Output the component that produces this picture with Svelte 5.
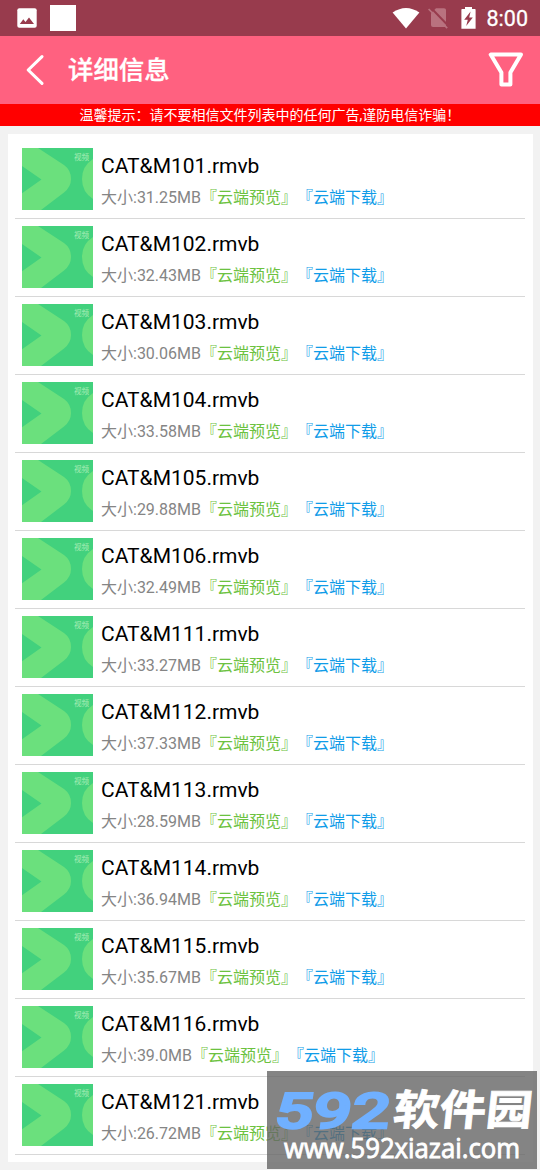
<script>
  const files = [
    { name: 'CAT&M101.rmvb', size: '31.25MB' },
    { name: 'CAT&M102.rmvb', size: '32.43MB' },
    { name: 'CAT&M103.rmvb', size: '30.06MB' },
    { name: 'CAT&M104.rmvb', size: '33.58MB' },
    { name: 'CAT&M105.rmvb', size: '29.88MB' },
    { name: 'CAT&M106.rmvb', size: '32.49MB' },
    { name: 'CAT&M111.rmvb', size: '33.27MB' },
    { name: 'CAT&M112.rmvb', size: '37.33MB' },
    { name: 'CAT&M113.rmvb', size: '28.59MB' },
    { name: 'CAT&M114.rmvb', size: '36.94MB' },
    { name: 'CAT&M115.rmvb', size: '35.67MB' },
    { name: 'CAT&M116.rmvb', size: '39.0MB' },
    { name: 'CAT&M121.rmvb', size: '26.72MB' },
  ];
</script>

<main>
  <div class="status-bar">
    <svg class="picture" width="20" height="20" viewBox="0 0 20 20">
      <rect x="0.3" y="0.3" width="19.4" height="19.4" rx="2" fill="#fff" />
      <path d="M2.8 16 L6.3 11.3 L8.5 14 L12 9.6 L17 16 Z" fill="#983b4d" />
    </svg>
    <div class="square"></div>
    <svg class="wifi" width="28" height="22" viewBox="0 0 28 22">
      <path d="M0.6 5.5 Q14 -3.5 27.4 5.5 L14 21.6 Z" fill="#fff" />
    </svg>
    <svg class="sim" width="20" height="22" viewBox="0 0 20 22">
      <path d="M8 1.2 H16 Q18 1.2 18 3 V20 H5 Q3 20 3 18 V6.2 Z" fill="#b9727f" />
      <path d="M2.4 0.2 L20.5 19" stroke="#983b4d" stroke-width="2" />
      <path d="M0.6 2 L19.2 21.2" stroke="#b9727f" stroke-width="1.7" />
    </svg>
    <svg class="battery" width="15" height="22" viewBox="0 0 15 22">
      <path d="M4 0 H11 V2 H14 Q14.6 2 14.6 3 V21.7 H0.4 V3 Q0.4 2 1 2 H4 Z" fill="#fff" />
      <path d="M9.6 4.6 L3.2 12.8 H6.8 L5.2 19 L11.8 10.4 H8.2 Z" fill="#983b4d" />
    </svg>
    <span class="clock">8:00</span>
  </div>

  <header>
    <svg class="back" width="20" height="32" viewBox="0 0 20 32">
      <path d="M17 2.7 L3.2 16 L17 29.3" fill="none" stroke="#fff" stroke-width="3.1" stroke-linecap="round" stroke-linejoin="round" />
    </svg>
    <h1>详细信息</h1>
    <svg class="filter" width="36" height="36" viewBox="0 0 36 36">
      <path d="M2.7 2.6 H33 L22.4 20.6 V32.5 H13.4 V20.6 Z" fill="none" stroke="#fff" stroke-width="4" stroke-linejoin="round" />
    </svg>
  </header>

  <div class="notice">温馨提示：请不要相信文件列表中的任何广告,谨防电信诈骗！</div>

  <div class="card">
    {#each files as file}
      <div class="row">
        <div class="thumb">
          <svg width="71" height="62" viewBox="0 0 71 62">
            <rect width="71" height="62" fill="#42d17d" />
            <path d="M0 0 H16 L42 17 Q49 22 49 31 Q49 39 42 44.5 L19 62 H0 V45.3 L19.5 31.5 L0 18 Z" fill="#6be07d" />
            <path d="M71 11 Q60 18 60 31 Q60 44 71 51 Z" fill="#6be07d" />
          </svg>
          <span class="kind">视频</span>
        </div>
        <div class="info">
          <div class="name">{file.name}</div>
          <div class="meta">大小:{file.size}<span class="preview">『云端预览』</span><span class="download">『云端下载』</span></div>
        </div>
      </div>
    {/each}
  </div>

  <div class="watermark">
    <svg width="270" height="98" viewBox="0 0 270 98">
      <g transform="translate(6 57) skewX(-8)">
        <text class="digits" x="0" y="0" textLength="115" lengthAdjust="spacingAndGlyphs">592</text>
      </g>
      <g transform="translate(125 54) skewX(-6)">
        <text class="brand" x="0" y="0" textLength="139" lengthAdjust="spacingAndGlyphs">软件园</text>
      </g>
      <text class="site" x="17" y="87" textLength="236" lengthAdjust="spacingAndGlyphs">www.592xiazai.com</text>
    </svg>
  </div>
</main>

<style>
  :global(body) {
    margin: 0;
    background: #f2f2f2;
  }

  main {
    position: relative;
    width: 540px;
    height: 1170px;
    overflow: hidden;
    background: #f2f2f2;
    font-family: Roboto, 'Noto Sans CJK SC', sans-serif;
  }

  svg {
    display: block;
    flex: none;
  }

  .status-bar {
    display: flex;
    align-items: center;
    height: 36px;
    box-sizing: border-box;
    padding: 0 12px 0 17px;
    background: #983b4d;
  }

  .square {
    width: 26px;
    height: 26px;
    margin-left: 13px;
    background: #fff;
  }

  .wifi {
    margin-left: auto;
  }

  .sim {
    margin-left: 8px;
  }

  .battery {
    margin-left: 13px;
  }

  .clock {
    margin-left: 11px;
    color: #fff;
    font-size: 21.5px;
    font-weight: 400;
    line-height: 36px;
    padding-top: 2px;
    -webkit-text-stroke: 0.3px #fff;
  }

  header {
    display: flex;
    align-items: center;
    height: 67.5px;
    box-sizing: border-box;
    padding: 0 16px 0 25px;
    background: #ff6180;
  }

  h1 {
    margin: 0 auto 0 23px;
    color: #fff;
    font-size: 25.4px;
    font-weight: 500;
    line-height: 36px;
    padding-top: 1px;
    -webkit-text-stroke: 0.3px #fff;
  }

  .notice {
    height: 22.5px;
    background: #f00;
    color: #fff;
    font-size: 14px;
    line-height: 22px;
    text-align: center;
    white-space: nowrap;
  }

  .card {
    box-sizing: border-box;
    height: 1028.5px;
    margin: 7.5px 7.5px 0;
    padding: 7.5px 7.5px 0;
    background: #fff;
  }

  .row {
    display: flex;
    height: 78px;
    box-sizing: border-box;
    padding: 7px 7px 0;
    border-bottom: 1.5px solid #d8d8d8;
  }

  .thumb {
    position: relative;
    width: 71px;
    height: 62px;
  }

  .kind {
    position: absolute;
    top: 4px;
    right: 4px;
    color: #a9edb5;
    font-size: 7.5px;
    line-height: 11px;
  }

  .info {
    margin-left: 8px;
    padding-top: 1px;
    white-space: nowrap;
  }

  .name {
    color: #000;
    font-size: 21px;
    line-height: 34px;
  }

  .meta {
    color: #858585;
    font-size: 16px;
    line-height: 30px;
  }

  .preview {
    color: #6cc240;
  }

  .download {
    margin-left: 8px;
    color: #109ce8;
  }

  .watermark {
    position: absolute;
    left: 267px;
    top: 1071px;
    width: 270px;
    height: 98px;
    background: rgba(101, 101, 101, 0.8);
  }

  .digits {
    fill: #70b0ff;
    stroke: #70b0ff;
    stroke-width: 2.4px;
    stroke-linejoin: miter;
    font-family: Roboto, sans-serif;
    font-size: 49px;
    font-weight: 500;
  }

  .brand {
    fill: #fff;
    stroke: #fff;
    stroke-width: 0.8px;
    font-family: 'Noto Sans CJK SC', sans-serif;
    font-size: 42px;
    font-weight: 700;
  }

  .site {
    fill: #fff;
    stroke: #fff;
    stroke-width: 0.9px;
    font-family: 'Open Sans', 'Noto Sans', sans-serif;
    font-size: 27px;
    font-weight: 400;
  }
</style>
